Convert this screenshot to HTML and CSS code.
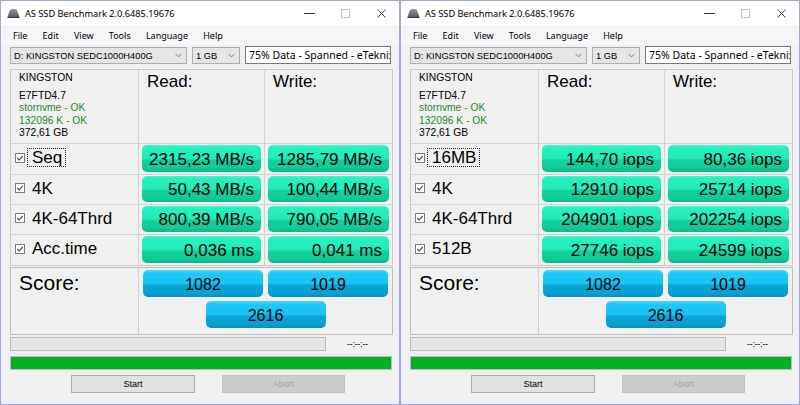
FILE: index.html
```html
<!DOCTYPE html>
<html>
<head>
<meta charset="utf-8">
<title>AS SSD Benchmark</title>
<link rel="stylesheet" href="styles.css">
</head>
<body>
<div class="win">
  <div class="titlebar">
    <svg class="appicon" viewBox="0 0 13 10"><defs><linearGradient id="ig1" x1="0" y1="0" x2="0" y2="1"><stop offset="0" stop-color="#9a9a9a"/><stop offset="1" stop-color="#555"/></linearGradient></defs><path d="M0.5 9.5 L2.5 3 Q3.5 0.8 6.5 0.8 Q9.5 0.8 10.5 3 L12.5 9.5 Z" fill="url(#ig1)"/><path d="M0.5 9.5 H12.5" stroke="#3a3a3a" stroke-width="1"/></svg>
    <span class="title">AS SSD Benchmark 2.0.6485.19676</span>
    <div class="controls">
      <div class="ctl"><span class="min"></span></div>
      <div class="ctl"><span class="max"></span></div>
      <div class="ctl"><svg class="x" viewBox="0 0 10 10"><path d="M0.5 0.5 L9.5 9.5 M9.5 0.5 L0.5 9.5" stroke="#222" stroke-width="1"/></svg></div>
    </div>
  </div>
  <div class="menubar"><span>File</span><span>Edit</span><span>View</span><span>Tools</span><span>Language</span><span>Help</span></div>
  <div class="toolbar">
    <div class="combo drive"><span>D: KINGSTON SEDC1000H400G</span><svg class="chev" viewBox="0 0 8 5"><path d="M0.5 0.5 L4 4 L7.5 0.5" fill="none" stroke="#6d6d6d"/></svg></div>
    <div class="combo size"><span>1 GB</span><svg class="chev" viewBox="0 0 8 5"><path d="M0.5 0.5 L4 4 L7.5 0.5" fill="none" stroke="#6d6d6d"/></svg></div>
    <div class="textbox">75% Data - Spanned - eTekni:</div>
  </div>
  <div class="grid">
    <div class="info">
      <div class="brand">KINGSTON</div>
      <div>E7FTD4.7</div>
      <div class="ok">stornvme - OK</div>
      <div class="ok">132096 K - OK</div>
      <div>372,61 GB</div>
    </div>
    <div class="head">Read:</div>
    <div class="head">Write:</div>

    <div class="label"><span class="cb"><svg viewBox="0 0 8 8"><path d="M1.2 4 L3.2 6 L6.8 1.8" fill="none" stroke="#444" stroke-width="1.1"/></svg></span><span class="lt focus">Seq</span></div>
    <div class="val"><div class="pill g">2315,23 MB/s</div></div>
    <div class="val"><div class="pill g">1285,79 MB/s</div></div>

    <div class="label"><span class="cb"><svg viewBox="0 0 8 8"><path d="M1.2 4 L3.2 6 L6.8 1.8" fill="none" stroke="#444" stroke-width="1.1"/></svg></span><span class="lt">4K</span></div>
    <div class="val"><div class="pill g">50,43 MB/s</div></div>
    <div class="val"><div class="pill g">100,44 MB/s</div></div>

    <div class="label"><span class="cb"><svg viewBox="0 0 8 8"><path d="M1.2 4 L3.2 6 L6.8 1.8" fill="none" stroke="#444" stroke-width="1.1"/></svg></span><span class="lt">4K-64Thrd</span></div>
    <div class="val"><div class="pill g">800,39 MB/s</div></div>
    <div class="val"><div class="pill g">790,05 MB/s</div></div>

    <div class="label"><span class="cb"><svg viewBox="0 0 8 8"><path d="M1.2 4 L3.2 6 L6.8 1.8" fill="none" stroke="#444" stroke-width="1.1"/></svg></span><span class="lt">Acc.time</span></div>
    <div class="val"><div class="pill g">0,036 ms</div></div>
    <div class="val"><div class="pill g">0,041 ms</div></div>
  </div>
  <div class="score">
    <div class="score-label">Score:</div>
    <div class="score-area">
      <div class="spill b">1082</div>
      <div class="spill b">1019</div>
      <div class="spill b total">2616</div>
    </div>
  </div>
  <div class="progress-row"><div class="bar empty"></div><span class="time">--:--:--</span></div>
  <div class="bar green"></div>
  <div class="buttons"><div class="btn">Start</div><div class="btn disabled">Abort</div></div>
</div>

<div class="win">
  <div class="titlebar">
    <svg class="appicon" viewBox="0 0 13 10"><defs><linearGradient id="ig2" x1="0" y1="0" x2="0" y2="1"><stop offset="0" stop-color="#9a9a9a"/><stop offset="1" stop-color="#555"/></linearGradient></defs><path d="M0.5 9.5 L2.5 3 Q3.5 0.8 6.5 0.8 Q9.5 0.8 10.5 3 L12.5 9.5 Z" fill="url(#ig2)"/><path d="M0.5 9.5 H12.5" stroke="#3a3a3a" stroke-width="1"/></svg>
    <span class="title">AS SSD Benchmark 2.0.6485.19676</span>
    <div class="controls">
      <div class="ctl"><span class="min"></span></div>
      <div class="ctl"><span class="max"></span></div>
      <div class="ctl"><svg class="x" viewBox="0 0 10 10"><path d="M0.5 0.5 L9.5 9.5 M9.5 0.5 L0.5 9.5" stroke="#222" stroke-width="1"/></svg></div>
    </div>
  </div>
  <div class="menubar"><span>File</span><span>Edit</span><span>View</span><span>Tools</span><span>Language</span><span>Help</span></div>
  <div class="toolbar">
    <div class="combo drive"><span>D: KINGSTON SEDC1000H400G</span><svg class="chev" viewBox="0 0 8 5"><path d="M0.5 0.5 L4 4 L7.5 0.5" fill="none" stroke="#6d6d6d"/></svg></div>
    <div class="combo size"><span>1 GB</span><svg class="chev" viewBox="0 0 8 5"><path d="M0.5 0.5 L4 4 L7.5 0.5" fill="none" stroke="#6d6d6d"/></svg></div>
    <div class="textbox">75% Data - Spanned - eTekni:</div>
  </div>
  <div class="grid">
    <div class="info">
      <div class="brand">KINGSTON</div>
      <div>E7FTD4.7</div>
      <div class="ok">stornvme - OK</div>
      <div class="ok">132096 K - OK</div>
      <div>372,61 GB</div>
    </div>
    <div class="head">Read:</div>
    <div class="head">Write:</div>

    <div class="label"><span class="cb"><svg viewBox="0 0 8 8"><path d="M1.2 4 L3.2 6 L6.8 1.8" fill="none" stroke="#444" stroke-width="1.1"/></svg></span><span class="lt focus">16MB</span></div>
    <div class="val"><div class="pill g">144,70 iops</div></div>
    <div class="val"><div class="pill g">80,36 iops</div></div>

    <div class="label"><span class="cb"><svg viewBox="0 0 8 8"><path d="M1.2 4 L3.2 6 L6.8 1.8" fill="none" stroke="#444" stroke-width="1.1"/></svg></span><span class="lt">4K</span></div>
    <div class="val"><div class="pill g">12910 iops</div></div>
    <div class="val"><div class="pill g">25714 iops</div></div>

    <div class="label"><span class="cb"><svg viewBox="0 0 8 8"><path d="M1.2 4 L3.2 6 L6.8 1.8" fill="none" stroke="#444" stroke-width="1.1"/></svg></span><span class="lt">4K-64Thrd</span></div>
    <div class="val"><div class="pill g">204901 iops</div></div>
    <div class="val"><div class="pill g">202254 iops</div></div>

    <div class="label"><span class="cb"><svg viewBox="0 0 8 8"><path d="M1.2 4 L3.2 6 L6.8 1.8" fill="none" stroke="#444" stroke-width="1.1"/></svg></span><span class="lt">512B</span></div>
    <div class="val"><div class="pill g">27746 iops</div></div>
    <div class="val"><div class="pill g">24599 iops</div></div>
  </div>
  <div class="score">
    <div class="score-label">Score:</div>
    <div class="score-area">
      <div class="spill b">1082</div>
      <div class="spill b">1019</div>
      <div class="spill b total">2616</div>
    </div>
  </div>
  <div class="progress-row"><div class="bar empty"></div><span class="time">--:--:--</span></div>
  <div class="bar green"></div>
  <div class="buttons"><div class="btn">Start</div><div class="btn disabled">Abort</div></div>
</div>
</body>
</html>
```
FILE: styles.css
```css
* { box-sizing: border-box; margin: 0; padding: 0; }
html, body { width: 800px; height: 405px; overflow: hidden; }
body {
  display: flex;
  background: #f0f0f0;
  font-family: "Liberation Sans", Arial, sans-serif;
  color: #000;
}
.win {
  width: 400px;
  height: 405px;
  border: 1px solid #a4a4f6;
  background: #f0f0f0;
  display: flex;
  flex-direction: column;
  flex: none;
}
.titlebar {
  height: 24px;
  flex: none;
  background: #fff;
  display: flex;
  align-items: center;
}
.appicon { width: 13px; height: 10px; margin-left: 6px; margin-right: 5px; flex: none; }
.title {
  font-family: "Noto Sans", sans-serif;
  font-size: 9.2px;
  color: #000;
  white-space: nowrap;
}
.controls { margin-left: auto; display: flex; height: 100%; }
.ctl { width: 36px; height: 100%; display: flex; align-items: center; justify-content: center; }
.min { width: 11px; height: 1px; background: #333; }
.max { width: 9px; height: 9px; border: 1px solid #c4c4c4; }
.x { width: 9px; height: 9px; }

.menubar {
  height: 20px;
  flex: none;
  background: #f5f6f7;
  display: flex;
  align-items: center;
  padding-left: 12px;
  gap: 15.2px;
  font-family: "Noto Sans", sans-serif;
  font-size: 9px;
}

.toolbar {
  height: 21px;
  flex: none;
  display: flex;
  align-items: flex-start;
  padding-left: 9px;
  gap: 5px;
}
.combo {
  margin-top: 2px;
  height: 17px;
  background: #e6e6e6;
  border: 1px solid #adadad;
  display: flex;
  align-items: center;
  padding-left: 3px;
  font-size: 9.3px;
  white-space: nowrap;
}
.combo span { flex: 1; }
.chev { width: 7px; height: 5px; margin-right: 4px; flex: none; }
.drive { width: 177px; }
.size { width: 48px; }
.textbox {
  margin-top: 1px;
  width: 146px;
  height: 18px;
  background: #fff;
  border: 1px solid #7a7a7a;
  font-family: "Noto Sans", sans-serif;
  font-size: 10.5px;
  line-height: 16px;
  padding-left: 3px;
  white-space: nowrap;
  overflow: hidden;
}

.grid {
  margin: 3px 0 0 9px;
  width: 383px;
  display: grid;
  grid-template-columns: 127px 125px 127px;
  grid-template-rows: 73px 30px 29px 29px 30px;
  gap: 1px;
  border: 1px solid #c9c9c9;
  background: #d2d2d2;
  flex: none;
}
.grid > div { background: #f0f0f0; }
.info {
  padding: 2px 0 0 8px;
  font-size: 10.3px;
  line-height: 12.5px;
}
.info .brand { margin-bottom: 5px; }
.ok { color: #1f8a34; }
.head {
  padding: 2px 0 0 8px;
  font-size: 17px;
  line-height: 20px;
}
.label {
  display: flex;
  align-items: center;
  padding: 0 0 3px 4px;
  font-size: 17px;
}
.cb {
  width: 10px;
  height: 10px;
  border: 1px solid #7c7c7c;
  background: #fff;
  display: flex;
  align-items: center;
  justify-content: center;
  margin-right: 2px;
  flex: none;
}
.cb svg { width: 8px; height: 8px; }
.lt {
  border: 1px dotted transparent;
  padding: 0 3px 0 4px;
  line-height: 17px;
}
.lt.focus { border-color: #222; }
.val { padding: 1px 3px 2px 3px; }
.pill {
  height: 100%;
  border-radius: 5px;
  display: flex;
  align-items: center;
  justify-content: flex-end;
  padding: 2px 7px 0 0;
  font-size: 17px;
  white-space: nowrap;
}
.g {
  background: linear-gradient(#48f5cc 0%, #26f0bf 10%, #22ecba 50%, #12d19e 56%, #10cb98 86%, #0db688 100%);
}
.b {
  background: linear-gradient(#4fd6fb 0%, #1ec8f6 12%, #18c3f3 50%, #09a6d9 56%, #08a0d2 86%, #078fbe 100%);
}

.score {
  margin: 1px 0 0 9px;
  width: 383px;
  height: 68px;
  display: grid;
  grid-template-columns: 127px 253px;
  gap: 1px;
  border: 1px solid #bdbdbd;
  background: #cfcfcf;
  flex: none;
}
.score > div { background: #f0f0f0; }
.score-label {
  padding: 3px 0 0 8px;
  font-size: 21px;
  line-height: 24px;
}
.score-area {
  display: grid;
  grid-template-columns: 120px 120px;
  grid-template-rows: 27px 27px;
  column-gap: 5px;
  row-gap: 4px;
  padding: 2px 0 0 4px;
}
.spill {
  border-radius: 5px;
  display: flex;
  align-items: center;
  justify-content: center;
  padding-top: 2px;
  font-size: 16px;
}
.spill.total { grid-column: 1 / 3; width: 120px; justify-self: center; }

.progress-row {
  margin: 2px 0 0 9px;
  height: 14px;
  display: flex;
  align-items: center;
  flex: none;
}
.bar { height: 14px; border: 1px solid #bcbcbc; }
.empty { width: 316px; background: #e6e6e6; }
.time { margin-left: 21px; font-size: 9px; letter-spacing: -0.3px; }
.green {
  margin: 5px 0 0 9px;
  width: 382px;
  background: #06b025;
  flex: none;
}
.buttons {
  margin: 5px 0 0 70px;
  display: flex;
  gap: 27px;
  flex: none;
}
.btn {
  width: 124px;
  height: 18px;
  background: #e1e1e1;
  border: 1px solid #adadad;
  font-size: 9px;
  display: flex;
  align-items: center;
  justify-content: center;
}
.btn.disabled {
  width: 123px;
  background: #cccccc;
  border-color: #bfbfbf;
  color: #a0a0a0;
}
```
